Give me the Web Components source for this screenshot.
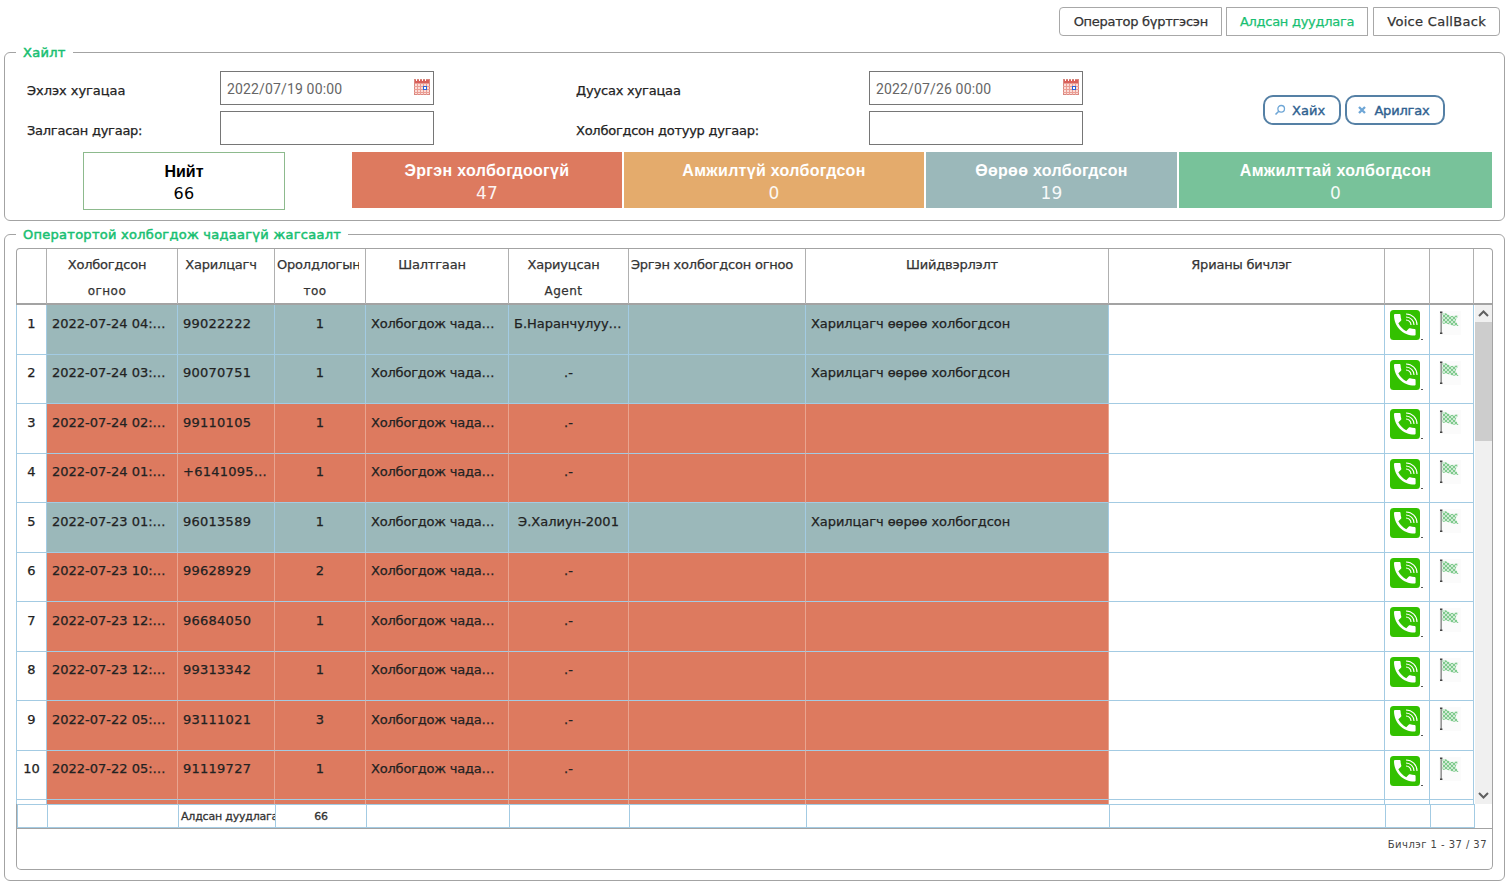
<!DOCTYPE html>
<html lang="mn"><head><meta charset="utf-8"><title>Алдсан дуудлага</title>
<style>
html,body{margin:0;padding:0;background:#fff;height:886px;overflow:hidden}
body{font:13px/1.2 "DejaVu Sans",sans-serif;color:#222;--cols:30px 131px 97px 91px 143px 120px 177px 303px 276px 45px 44px}
</style></head><body>
<app-page></app-page>
<script>
const def=(name,css,html,extra)=>{customElements.define(name,class extends HTMLElement{
  constructor(){super();const r=this.attachShadow({mode:'open'});r.innerHTML=`<style>${css}</style>${html}`;}
  connectedCallback(){extra&&extra.call(this);}
});};

const PHONE=`<svg width="33" height="31" viewBox="0 0 33 31" style="display:block"><rect width="30" height="30" rx="3.5" fill="#33c100"/><rect x="31" y="29" width="2" height="1" fill="#555"/><path transform="translate(.4 .4) scale(1.2)" fill="#fff" d="M6.62 10.79c1.44 2.83 3.76 5.14 6.59 6.59l2.2-2.2c.27-.27.67-.36 1.02-.24 1.12.37 2.33.57 3.57.57.55 0 1 .45 1 1V20c0 .55-.45 1-1 1-9.39 0-17-7.61-17-17 0-.55.45-1 1-1h3.5c.55 0 1 .45 1 1 0 1.25.2 2.45.57 3.57.11.35.03.74-.25 1.02l-2.2 2.2z"/><g fill="none" stroke="#fff" stroke-width="1.1"><path d="M16 10a5 5 0 0 1 5 5"/><path d="M16 7a8 8 0 0 1 8 8"/><path d="M16 4a11 11 0 0 1 11 11"/></g></svg>`;
let uid=0;
const FLAG=()=>{const id='ck'+(++uid);return `<svg width="22" height="24" viewBox="0 0 22 24" style="display:block"><defs><pattern id="${id}" width="4" height="4" patternUnits="userSpaceOnUse"><rect width="4" height="4" fill="#cfead4"/><rect width="2" height="2" fill="#7fca8d"/><rect x="2" y="2" width="2" height="2" fill="#7fca8d"/></pattern></defs><rect width="22" height="24" fill="#fbfbfb"/><rect x="1.500" y="1" width="1.300" height="22" fill="#7d7d7d"/><rect x="1" y="0.5" width="2.400" height="1.500" fill="#444"/><rect x="1" y="21.5" width="2.400" height="1.500" fill="#444"/><path d="M3.500 2C7 1.500 9 3.500 12 5L19.500 4.500L16.500 9.500L19.500 15L13 14.500C10 13 7 11.500 3.500 13Z" fill="url(#${id})"/></svg>`;};
const CAL=`<svg width="16" height="16" viewBox="0 0 16 16" style="display:block"><rect x=".5" y=".5" width="15" height="15" fill="#fbdcd6" stroke="#d98880"/><rect x="1" y="1" width="14" height="3.500" fill="#d9605a"/><g stroke="#ea9d94" stroke-width="1"><path d="M0 7.500H16M0 10.500H16M0 13.500H16M3.500 4V16M6.500 4V16M9.500 4V16M12.500 4V16"/></g><g fill="#fff"><rect x="2" y="0" width="1" height="2"/><rect x="5" y="0" width="1" height="2"/><rect x="8" y="0" width="1" height="2"/><rect x="11" y="0" width="1" height="2"/></g><rect x="9.500" y="7.500" width="3" height="3" fill="#fff" stroke="#2a63d8"/></svg>`;

def('top-tab',`:host{display:block;height:27px;border:1px solid #a8a8a8;padding:0 13px;font:13px/27px "DejaVu Sans",sans-serif;color:#333;background:#fff;letter-spacing:var(--ls,-.27px);white-space:nowrap;-webkit-text-stroke:.25px currentColor}
:host([active]){color:#19bf72;margin-right:1px}
:host([pos=first]){border-radius:4px 0 0 4px;padding-left:14px}:host([pos=last]){border-radius:0 4px 4px 0}`,`<slot></slot>`);

def('top-bar',`:host{display:flex;justify-content:flex-end;gap:4px;padding:7px 7px 0 0;height:29px}`,`<slot></slot>`);

def('group-box',`:host{display:block;margin:0 2px 0 4px;box-sizing:border-box}
fieldset{margin:0;border:1.5px solid #a3a3a3;border-radius:6px;padding:0 11px;min-width:0;box-sizing:border-box;height:100%}
legend{margin-left:0;padding:2px 7px 0;font:13px/16px "DejaVu Sans",sans-serif;color:#19bf72;letter-spacing:.27px;-webkit-text-stroke:.5px currentColor}`,
`<fieldset><legend><slot name="title"></slot></legend><slot></slot></fieldset>`);

def('form-grid',`:host{display:grid;grid-template-columns:193px 214px 142px 293px 214px 180px 200px;grid-template-rows:34px 34px;row-gap:6px;padding-top:10px;margin-left:11px}`,`<slot></slot>`);

def('form-label',`:host{display:flex;align-items:center;padding-top:5px;box-sizing:border-box;font:13px/16px "DejaVu Sans",sans-serif;color:#222;letter-spacing:var(--ls,-.25px);-webkit-text-stroke:.25px currentColor}`,`<slot></slot>`);

def('text-field',`:host{display:block;box-sizing:border-box;border:1px solid #767676;height:34px;padding:0 3px 0 6px;background:#fff}
.w{display:flex;align-items:center;justify-content:space-between;height:100%}
.v{font:14px/1 Roboto,sans-serif;color:#666;padding-top:2px;letter-spacing:.15px}
.i{margin-top:-2px}`,`<div class="w"><span class="v"><slot></slot></span><span class="i" id="i"></span></div>`,function(){if(this.hasAttribute('cal'))this.shadowRoot.getElementById('i').innerHTML=CAL;});

def('action-set',`:host{grid-column:7;grid-row:1/3;display:flex;gap:4px;padding:24px 0 0 0;align-items:flex-start}`,`<slot></slot>`);

def('act-btn',`:host{display:flex;align-items:center;box-sizing:border-box;height:30px;border:2px solid #5580a5;border-radius:10px;padding:0 14px 0 9px;gap:6px;font:13px/1 "DejaVu Sans",sans-serif;color:#2f6190;letter-spacing:var(--ls,.1px);background:#fff;white-space:nowrap;-webkit-text-stroke:.4px currentColor}
svg{display:block}`,`<span id="i"></span><slot></slot>`,function(){
 const k=this.getAttribute('icon');
 this.shadowRoot.getElementById('i').innerHTML=k==='search'
 ?`<svg width="12" height="12" viewBox="0 0 12 12"><circle cx="7.200" cy="4.800" r="3.300" fill="none" stroke="#6ea6d6" stroke-width="1.300"/><path d="M4.800 7.200L1.500 10.500" stroke="#6ea6d6" stroke-width="1.600"/></svg>`
 :`<svg width="12" height="12" viewBox="0 0 12 12"><path d="M3 3L9 9M9 3L3 9" stroke="#6ea6d6" stroke-width="2.300"/></svg>`;});

def('stat-row',`:host{display:flex;gap:2px;margin-top:7px;margin-right:1px;height:58px;align-items:flex-start}`,`<slot></slot>`);

def('stat-card',`:host{display:flex;flex:none;flex-direction:column;align-items:center;box-sizing:border-box;height:56px;color:#fff;padding-top:9px;text-align:center;
 font:bold 16px/20px "Liberation Sans",sans-serif;letter-spacing:.3px}
:host([tone=total]){height:58px;border:1px solid #8dba8d;color:#000;letter-spacing:0;padding-top:9px}
:host([tone=red]){background:#dd7a5f}:host([tone=orange]){background:#e4ab6c}:host([tone=teal]){background:#9bb8ba}:host([tone=green]){background:#78c29a}
.n{font:17px/24px "DejaVu Sans",sans-serif;letter-spacing:.3px;opacity:.92}
:host([tone=total]) .n{opacity:1;line-height:24px;font-size:16px}`,`<slot></slot><div class="n"><slot name="n"></slot></div>`);

def('grid-panel',`:host{display:block;width:1477px;margin-top:5px}
.pager{box-sizing:border-box;height:41px;border:1px solid #a3a3a3;border-top:0;border-radius:0 0 5px 5px;text-align:right;padding:10px 5px 0 0;font:10px/12px "DejaVu Sans",sans-serif;color:#444;letter-spacing:.45px}`,
`<slot name="head"></slot><slot name="body"></slot><slot name="foot"></slot><div class="pager"><slot name="pager"></slot></div>`);

def('grid-head',`:host{display:block;box-sizing:border-box;height:57px;border:1px solid #a3a3a3;border-bottom:2px solid #a3a3a3;border-radius:4px 4px 0 0}
.r{display:grid;grid-template-columns:var(--cols);height:100%}`,`<div class="r"><slot></slot></div>`);

def('head-cell',`:host{display:block;box-sizing:border-box;border-right:1px solid #b0b0b0;white-space:nowrap;text-align:center;font:13px/26px "DejaVu Sans",sans-serif;color:#333;padding:3px 10px 0 0;letter-spacing:-.2px;-webkit-text-stroke:.25px currentColor;min-width:0}
.c{overflow:hidden}
:host([tight]){padding-right:6px;padding-left:2px}
:host([tight]) .c{text-align:left}
::slotted(small){display:block;font-size:12px;letter-spacing:.45px;text-align:center}`,`<div class="c"><slot></slot></div>`);

def('grid-body',`:host{display:flex;box-sizing:border-box;height:499px;border-left:1px solid #a3cbe3;border-right:1px solid #a3a3a3;overflow:hidden}
.rows{width:1457px;flex:none;overflow:hidden}
.bar{width:17px;margin-left:1px;background:#f0f0f0;display:flex;flex-direction:column;flex:none}
.up,.dn{height:17px;display:flex;align-items:center;justify-content:center}
.th{height:119px;background:#cdcdcd}.sp{flex:1}`,
`<div class="rows"><slot></slot></div><div class="bar"><div class="up"><svg width="11" height="7" viewBox="0 0 11 7"><path d="M1 6L5.500 1.500L10 6" fill="none" stroke="#606060" stroke-width="2"/></svg></div><div class="th"></div><div class="sp"></div><div class="dn"><svg width="11" height="7" viewBox="0 0 11 7"><path d="M1 1L5.500 5.500L10 1" fill="none" stroke="#606060" stroke-width="2"/></svg></div></div>`);

def('grid-row',`:host{display:grid;grid-template-columns:var(--cols);height:49.5px;box-sizing:border-box}`,`<slot></slot>`);

def('grid-cell',`:host{display:block;box-sizing:border-box;min-width:0;border-right:1px solid #a3cbe3;border-bottom:1px solid #a3cbe3;padding:10.75px 5px 0;font:13px/16px "DejaVu Sans",sans-serif;color:#222;white-space:nowrap;overflow:hidden;text-overflow:ellipsis;letter-spacing:var(--ls,0);-webkit-text-stroke:.25px currentColor}
:host([c]){text-align:center}
:host([t=teal]){background:#9bb8ba}
:host([t=red]){background:#dd7a5f;border-right-color:#e9a48f}
:host([icon]){padding:5px 0 0 5px;overflow:visible}
:host([flag]){padding:6px 0 0 9px}`,`<slot></slot>`);

def('grid-foot',`:host{display:block;box-sizing:border-box;height:25px;border-left:1px solid #a3a3a3;border-right:1px solid #a3a3a3;border-bottom:1px solid #a3a3a3}
.r{display:grid;grid-template-columns:var(--cols);box-sizing:border-box;width:1458px;height:24px;border:1px solid #a3cbe3;border-right:0}`,`<div class="r"><slot></slot></div>`);

def('foot-cell',`:host{display:block;box-sizing:border-box;border-right:1px solid #a3cbe3;font:11px/23px "DejaVu Sans",sans-serif;color:#333;white-space:nowrap;overflow:hidden;padding-left:2px;letter-spacing:-.2px;-webkit-text-stroke:.3px currentColor}
:host([c]){text-align:center;padding-left:0}`,`<slot></slot>`);

const rows=[
['2022-07-24 04:25:12','99022222','1','Б.Наранчулуу-2004','Харилцагч өөрөө холбогдсон','teal',0],
['2022-07-24 03:11:40','90070751','1','.-','Харилцагч өөрөө холбогдсон','teal',1],
['2022-07-24 02:45:08','99110105','1','.-','','red',1],
['2022-07-24 01:32:19','+61410951234','1','.-','','red',1],
['2022-07-23 01:14:55','96013589','1','Э.Халиун-2001','Харилцагч өөрөө холбогдсон','teal',1],
['2022-07-23 10:47:03','99628929','2','.-','','red',1],
['2022-07-23 12:39:21','96684050','1','.-','','red',1],
['2022-07-23 12:05:37','99313342','1','.-','','red',1],
['2022-07-22 05:58:14','93111021','3','.-','','red',1],
['2022-07-22 05:20:46','91119727','1','.-','','red',1],
['2022-07-22 04:10:02','99887766','1','.-','','red',1]];

customElements.define('app-page',class extends HTMLElement{
 constructor(){super();const r=this.attachShadow({mode:'open'});
 const rowHtml=rows.map((d,i)=>`<grid-row>
  <grid-cell c>${i+1}</grid-cell>
  <grid-cell t="${d[5]}">${d[0]}</grid-cell>
  <grid-cell t="${d[5]}" style="--ls:.25px">${d[1]}</grid-cell>
  <grid-cell t="${d[5]}" c>${d[2]}</grid-cell>
  <grid-cell t="${d[5]}" style="padding-right:10px;--ls:-.2px">Холбогдож чадаагүй</grid-cell>
  <grid-cell t="${d[5]}" ${d[6]?'c':''}>${d[3]}</grid-cell>
  <grid-cell t="${d[5]}"></grid-cell>
  <grid-cell t="${d[5]}" style="--ls:-.07px">${d[4]}</grid-cell>
  <grid-cell></grid-cell>
  <grid-cell icon>${PHONE}</grid-cell>
  <grid-cell icon flag>${FLAG()}</grid-cell>
 </grid-row>`).join('');
 r.innerHTML=`<style>:host{display:block}
 .g1{height:178px;margin-top:7px}.g2{height:656px;margin-top:4px}</style>
 <top-bar><top-tab pos="first">Оператор бүртгэсэн</top-tab><top-tab active>Алдсан дуудлага</top-tab><top-tab pos="last" style="--ls:.3px">Voice CallBack</top-tab></top-bar>
 <group-box class="g1"><span slot="title">Хайлт</span>
  <form-grid>
   <form-label style="--ls:-.05px">Эхлэх хугацаа</form-label><text-field cal>2022/07/19 00:00</text-field><span></span><form-label style="--ls:-.2px">Дуусах хугацаа</form-label><text-field cal>2022/07/26 00:00</text-field>
   <action-set><act-btn icon="search">Хайх</act-btn><act-btn icon="x" style="--ls:-.2px">Арилгах</act-btn></action-set>
   <form-label style="grid-column:1">Залгасан дугаар:</form-label><text-field></text-field><span></span><form-label>Холбогдсон дотуур дугаар:</form-label><text-field></text-field>
  </form-grid>
  <stat-row>
   <stat-card tone="total" style="width:202px;margin:0 65px 0 67px">Нийт<span slot="n">66</span></stat-card>
   <stat-card tone="red" style="width:270px">Эргэн холбогдоогүй<span slot="n">47</span></stat-card>
   <stat-card tone="orange" style="width:300px">Амжилтүй холбогдсон<span slot="n">0</span></stat-card>
   <stat-card tone="teal" style="width:251px">Өөрөө холбогдсон<span slot="n">19</span></stat-card>
   <stat-card tone="green" style="width:313px">Амжилттай холбогдсон<span slot="n">0</span></stat-card>
  </stat-row>
 </group-box>
 <group-box class="g2"><span slot="title">Оператортой холбогдож чадаагүй жагсаалт</span>
  <grid-panel>
   <grid-head slot="head">
    <head-cell></head-cell><head-cell>Холбогдсон<small>огноо</small></head-cell><head-cell>Харилцагч</head-cell><head-cell tight>Оролдлогын<small style="margin-left:-6px">тоо</small></head-cell><head-cell>Шалтгаан</head-cell><head-cell>Хариуцсан<small>Agent</small></head-cell><head-cell>Эргэн холбогдсон огноо</head-cell><head-cell>Шийдвэрлэлт</head-cell><head-cell>Ярианы бичлэг</head-cell><head-cell></head-cell><head-cell></head-cell>
   </grid-head>
   <grid-body slot="body">${rowHtml}</grid-body>
   <grid-foot slot="foot"><foot-cell></foot-cell><foot-cell></foot-cell><foot-cell>Алдсан дуудлага</foot-cell><foot-cell c>66</foot-cell><foot-cell></foot-cell><foot-cell></foot-cell><foot-cell></foot-cell><foot-cell></foot-cell><foot-cell></foot-cell><foot-cell></foot-cell><foot-cell></foot-cell></grid-foot>
   <span slot="pager">Бичлэг 1 - 37 / 37</span>
  </grid-panel>
 </group-box>`;}
});
</script></body></html>
